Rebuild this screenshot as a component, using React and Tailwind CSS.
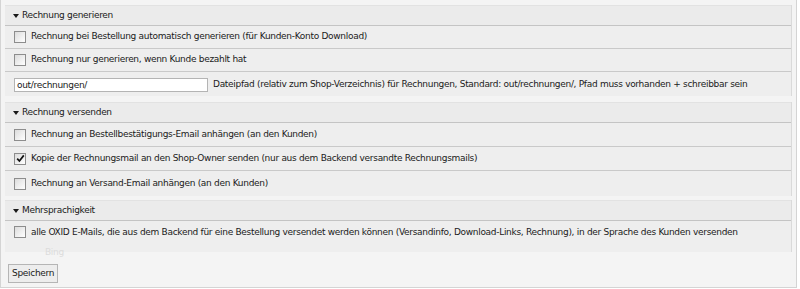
import { useState } from "react";

const FONT = "font-['DejaVu_Sans',Verdana,sans-serif] text-[9px] tracking-[-0.3px]";

function SectionHeader({ title }) {
  return (
    <div className="flex h-[21px] items-center border-t border-b border-t-[#e2e2e2] border-b-[#c4c4c4] bg-[#ebebeb] pl-[8px] text-[#1a1a1a]">
      <span className="mr-[3px] inline-block h-0 w-0 border-x-[3px] border-t-[4px] border-x-transparent border-t-[#1a1a1a]" />
      <span>{title}</span>
    </div>
  );
}

function Checkbox({ checked, onChange }) {
  return (
    <span
      onClick={onChange}
      className="relative mr-[5px] inline-flex h-[12px] w-[12px] shrink-0 items-center justify-center border border-[#8d8d8d] bg-gradient-to-br from-[#dcdcdc] to-white"
    >
      {checked && (
        <svg width="9" height="9" viewBox="0 0 9 9">
          <path d="M1.2 4.6 L3.4 7 L7.8 1.4" fill="none" stroke="#111" strokeWidth="1.7" />
        </svg>
      )}
    </span>
  );
}

function CheckRow({ label, checked, onChange, className = "h-[24px]", children }) {
  return (
    <div className={`relative flex items-center border-b border-b-[#c9c9c9] bg-[#eeeeee] pl-[9px] text-[#1a1a1a] ${className}`}>
      <Checkbox checked={checked} onChange={onChange} />
      <span>{label}</span>
      {children}
    </div>
  );
}

export default function App() {
  const [options, setOptions] = useState({
    autoGenerate: false,
    onlyPaid: false,
    attachOrder: false,
    copyOwner: true,
    attachShipping: false,
    multiLang: false,
  });
  const [path, setPath] = useState("out/rechnungen/");

  function toggle(key) {
    setOptions((prev) => ({ ...prev, [key]: !prev[key] }));
  }

  return (
    <div className={`h-[289px] w-[800px] bg-white ${FONT}`}>
      <div className="flex h-[288px] w-[797px] flex-col border-x border-b border-[#d4d4d4] bg-[#f4f4f4] px-[4px] pt-[5px]">
        <div className="border-r border-[#dadada]">
          <SectionHeader title="Rechnung generieren" />
          <CheckRow
            label="Rechnung bei Bestellung automatisch generieren (für Kunden-Konto Download)"
            checked={options.autoGenerate}
            onChange={() => toggle("autoGenerate")}
            className="h-[23px]"
          />
          <CheckRow
            label="Rechnung nur generieren, wenn Kunde bezahlt hat"
            checked={options.onlyPaid}
            onChange={() => toggle("onlyPaid")}
            className="h-[23px]"
          />
          <div className="flex h-[24px] items-center bg-[#eeeeee] pl-[9px] pt-[2px] text-[#1a1a1a]">
            <input
              type="text"
              value={path}
              onChange={(event) => setPath(event.target.value)}
              className="mr-[5px] h-[14px] w-[194px] border border-[#b4b4b4] bg-white px-[2px] text-[9px] text-[#1a1a1a] outline-none"
            />
            <span>
              Dateipfad (relativ zum Shop-Verzeichnis) für Rechnungen, Standard: out/rechnungen/, Pfad muss vorhanden + schreibbar sein
            </span>
          </div>
        </div>

        <div className="mt-[6px] border-r border-[#dadada]">
          <SectionHeader title="Rechnung versenden" />
          <CheckRow
            label="Rechnung an Bestellbestätigungs-Email anhängen (an den Kunden)"
            checked={options.attachOrder}
            onChange={() => toggle("attachOrder")}
          />
          <CheckRow
            label="Kopie der Rechnungsmail an den Shop-Owner senden (nur aus dem Backend versandte Rechnungsmails)"
            checked={options.copyOwner}
            onChange={() => toggle("copyOwner")}
          />
          <CheckRow
            label="Rechnung an Versand-Email anhängen (an den Kunden)"
            checked={options.attachShipping}
            onChange={() => toggle("attachShipping")}
            className="h-[25px] border-b-0"
          />
        </div>

        <div className="mt-[4px] border-r border-[#dadada]">
          <SectionHeader title="Mehrsprachigkeit" />
          <CheckRow
            label="alle OXID E-Mails, die aus dem Backend für eine Bestellung versendet werden können (Versandinfo, Download-Links, Rechnung), in der Sprache des Kunden versenden"
            checked={options.multiLang}
            onChange={() => toggle("multiLang")}
            className="h-[31px] items-start border-b-0 pt-[5px]"
          >
            <span className="absolute left-[40px] top-[25px] text-[#dcdcdc]">Bing</span>
          </CheckRow>
        </div>

        <div className="pt-[12px] pl-[3px]">
          <button
            type="button"
            className="h-[19px] border border-[#b5b5b5] bg-[#ededed] px-[3px] text-[9px] text-[#1a1a1a]"
          >
            Speichern
          </button>
        </div>
      </div>
    </div>
  );
}
